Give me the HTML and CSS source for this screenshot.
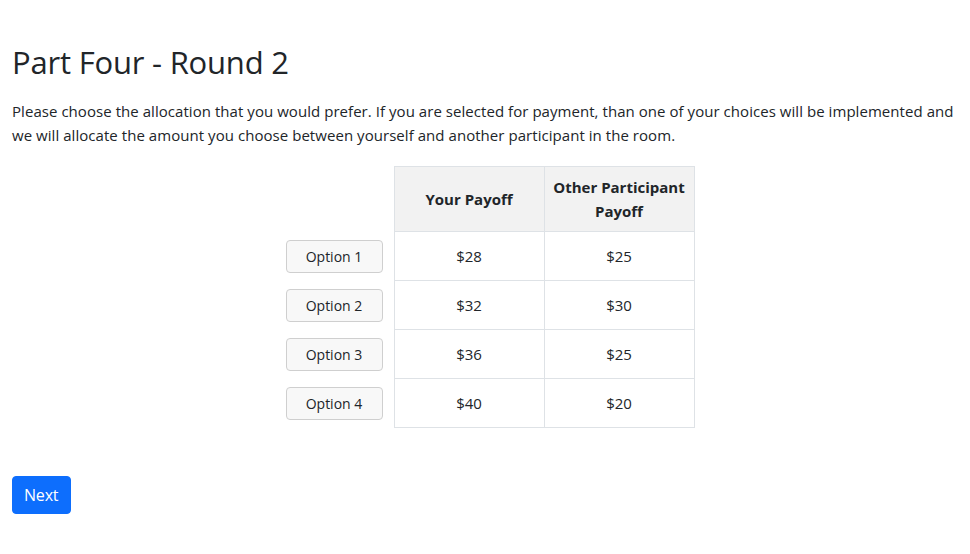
FILE: index.html
```html
<!DOCTYPE html>
<html lang="en">
<head>
<meta charset="utf-8">
<title>Part Four - Round 2</title>
<link rel="stylesheet" href="styles.css">
</head>
<body>
<div class="page">
  <h2 class="title">Part Four - Round 2</h2>
  <p class="intro">Please choose the allocation that you would prefer. If you are selected for payment, than one of your choices will be implemented and we will allocate the amount you choose between yourself and another participant in the room.</p>
  <table class="choices">
    <thead>
      <tr>
        <th class="blank"></th>
        <th class="head">Your Payoff</th>
        <th class="head">Other Participant Payoff</th>
      </tr>
    </thead>
    <tbody>
      <tr><td class="opt"><button class="option">Option 1</button></td><td class="val">$28</td><td class="val">$25</td></tr>
      <tr><td class="opt"><button class="option">Option 2</button></td><td class="val">$32</td><td class="val">$30</td></tr>
      <tr><td class="opt"><button class="option">Option 3</button></td><td class="val">$36</td><td class="val">$25</td></tr>
      <tr><td class="opt"><button class="option">Option 4</button></td><td class="val">$40</td><td class="val">$20</td></tr>
    </tbody>
  </table>
  <button class="next">Next</button>
</div>
</body>
</html>
```
FILE: styles.css
```css
* { box-sizing: border-box; }
html, body { margin: 0; padding: 0; background: #fff; }
body {
  font-family: "Segoe UI", "Open Sans", "Noto Sans", sans-serif;
  font-size: 15px;
  line-height: 24px;
  letter-spacing: 0.05px;
  color: #212529;
}
.page {
  padding: 43px 12px 0 12px;
}
.title {
  margin: 0 0 18px 0;
  font-size: 31px;
  font-weight: 400;
  line-height: 38px;
  letter-spacing: -0.2px;
}
.intro {
  margin: 0 0 19px 0;
}
.choices {
  border-collapse: collapse;
  margin: 0 auto;
  letter-spacing: 0;
}
.choices th, .choices td {
  padding: 8px;
  text-align: center;
}
.blank { border: none; background: none; }
.head {
  width: 150px;
  background: #f2f2f2;
  border: 1px solid #dee2e6;
  font-weight: 700;
  font-size: 15px;
}
.val {
  border: 1px solid #dee2e6;
  font-size: 15px;
}
.opt { padding: 8px 11px 8px 10px !important; }
.option {
  display: block;
  width: 97px;
  height: 33px;
  background: #f8f8f8;
  border: 1px solid #cfcfcf;
  border-radius: 4px;
  font-family: inherit;
  font-size: 14px;
  color: #212529;
  padding: 0;
}
.next {
  display: block;
  margin-top: 48px;
  background: #0d6efd;
  color: #fff;
  border: 1px solid #0d6efd;
  border-radius: 4px;
  font-family: inherit;
  font-size: 16px;
  line-height: 24px;
  letter-spacing: -0.2px;
  padding: 6px 12px 6px 11px;
}
```
